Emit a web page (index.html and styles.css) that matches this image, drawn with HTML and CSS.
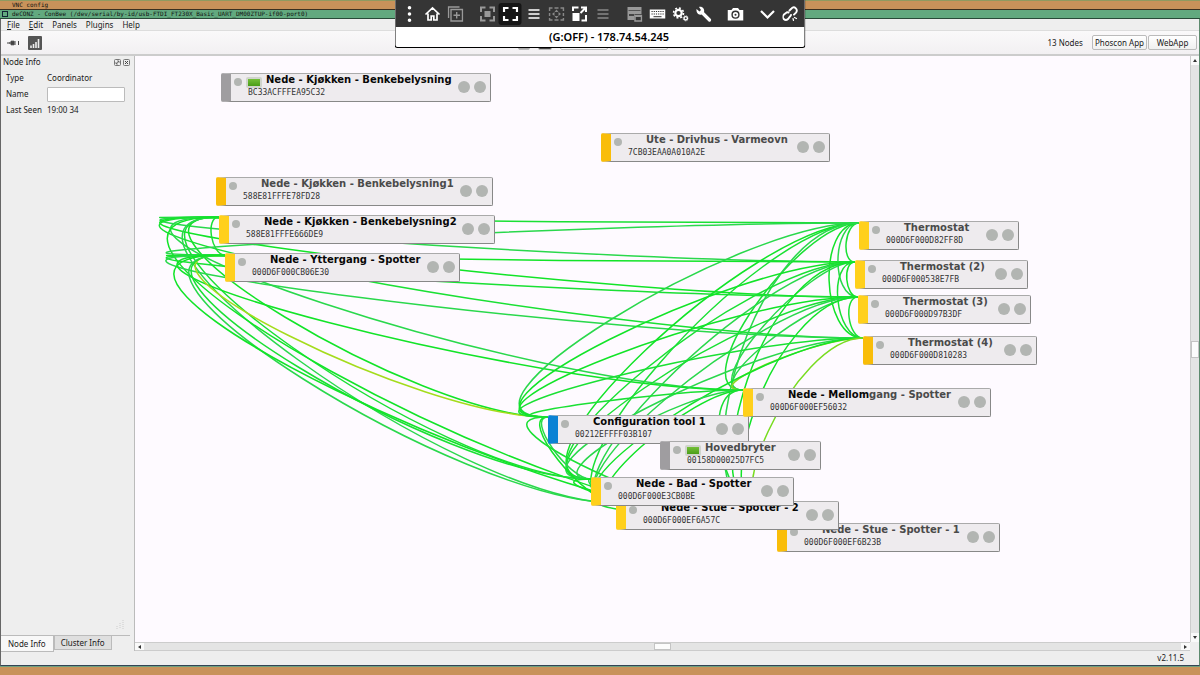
FILE: index.html
```html
<!DOCTYPE html>
<html lang="en">
<head>
<meta charset="utf-8">
<title>deCONZ</title>
<link rel="stylesheet" href="styles.css">
</head>
<body>
<div class="titlebar titlebar-vnc">VNC config</div>
<div class="titlebar titlebar-app"><span class="win-box"></span>deCONZ - ConBee (/dev/serial/by-id/usb-FTDI_FT230X_Basic_UART_DM00ZTUP-if00-port0)</div>

<div class="window">
  <nav class="menu">
    <button><u>F</u>ile</button><button><u>E</u>dit</button><button>Panels</button><button>Plugins</button><button>Help</button>
  </nav>

  <div class="toolbar">
    <button class="icon-btn" aria-label="Connect"><svg width="14" height="8" viewBox="0 0 14 8"><path d="M1 4h3M5 2.200h3v3.600H5zM3 4h3" stroke="#444" stroke-width="1" fill="#444"/><path d="M8 3h2M8 5h2M12.500 2v4" stroke="#444" stroke-width="1"/></svg></button>
    <button class="icon-btn" aria-label="Signal"><svg width="14" height="14" viewBox="0 0 14 14"><rect width="14" height="14" rx="1" fill="#555"/><path d="M3 12V9.500M5.500 12V8M8 12V6M10.500 12V3" stroke="#eee" stroke-width="1.600"/></svg></button>
    <div class="tool-mid">
      <button class="chip chip-grey" aria-label="Indicator"></button>
      <button class="chip chip-dark" aria-label="Neighbours"></button>
      <button class="chip chip-wide" aria-label="Leave"></button>
      <button class="chip chip-wider" aria-label="Join"></button>
    </div>
    <span class="count">13 Nodes</span>
    <button class="push">Phoscon App</button>
    <button class="push">WebApp</button>
  </div>

  <div class="main">
    <aside class="panel">
      <div class="panel-head"><span>Node Info</span>
        <button aria-label="Float"><svg width="7" height="7" viewBox="0 0 7 7"><rect x=".5" y=".5" width="6" height="6" rx="1" fill="none" stroke="#777"/><path d="M2 5l3-3M3 2h2v2M2 3v2h2" fill="none" stroke="#555" stroke-width=".7"/></svg></button>
        <button aria-label="Close"><svg width="7" height="7" viewBox="0 0 7 7"><rect x=".5" y=".5" width="6" height="6" rx="1" fill="none" stroke="#777"/><path d="M2 2l3 3M5 2L2 5" stroke="#444"/></svg></button>
      </div>
      <div class="form">
        <span>Type</span><span>Coordinator</span>
        <label for="name">Name</label><input id="name" type="text">
        <span>Last Seen</span><span>19:00 34</span>
      </div>
      <svg class="grip" width="9" height="9" viewBox="0 0 9 9"><path d="M8 0v9M5 3v6M2 6v3" stroke="#ccc" stroke-dasharray="1 1"/></svg>
      <div class="tabs"><button class="tab tab-on">Node Info</button><button class="tab">Cluster Info</button></div>
    </aside>

    <div class="view">
      <div class="scene" id="scene">
        <svg class="links" id="links"></svg>

        <div class="node off" style="left:86px;top:17px;width:270px"><i class="led"></i><i class="battery"></i><b class="dark">Nede - Kjøkken - Benkebelysning</b><code>BC33ACFFFEA95C32</code><i class="ports"></i></div>
        <div class="node amber" style="left:466px;top:77px;width:229px"><i class="led"></i><b>Ute - Drivhus - Varmeovn</b><code>7CB03EAA0A010A2E</code><i class="ports"></i></div>
        <div class="node amber" style="left:81px;top:121px;width:277px"><i class="led"></i><b>Nede - Kjøkken - Benkebelysning1</b><code>588E81FFFE78FD28</code><i class="ports"></i></div>
        <div class="node" id="b2" style="left:84px;top:159px;width:276px"><i class="led"></i><b class="dark">Nede - Kjøkken - Benkebelysning2</b><code>588E81FFFE666DE9</code><i class="ports"></i></div>
        <div class="node" id="yt" style="left:90px;top:197px;width:235px"><i class="led"></i><b class="dark">Nede - Yttergang - Spotter</b><code>000D6F000CB06E30</code><i class="ports"></i></div>
        <div class="node" id="t1" style="left:724px;top:165px;width:160px"><i class="led"></i><b>Thermostat</b><code>000D6F000D82FF8D</code><i class="ports"></i></div>
        <div class="node" id="t2" style="left:720px;top:204px;width:173px"><i class="led"></i><b>Thermostat (2)</b><code>000D6F000538E7FB</code><i class="ports"></i></div>
        <div class="node" id="t3" style="left:723px;top:239px;width:173px"><i class="led"></i><b>Thermostat (3)</b><code>000D6F000D97B3DF</code><i class="ports"></i></div>
        <div class="node amber" id="t4" style="left:728px;top:280px;width:174px"><i class="led"></i><b>Thermostat (4)</b><code>000D6F000D810283</code><i class="ports"></i></div>
        <div class="node amber" id="s1" style="left:642px;top:467px;width:223px"><i class="led"></i><b>Nede - Stue - Spotter - 1</b><code>000D6F000EF6B23B</code><i class="ports"></i></div>
        <div class="node" id="s2" style="left:481px;top:445px;width:223px"><i class="led"></i><b class="dark">Nede - Stue - Spotter - 2</b><code>000D6F000EF6A57C</code><i class="ports"></i></div>
        <div class="node blue" id="cf" style="left:413px;top:359px;width:201px"><i class="led"></i><b class="dark">Configuration tool 1</b><code>00212EFFFF03B107</code><i class="ports"></i></div>
        <div class="node" id="me" style="left:608px;top:332px;width:248px"><i class="led"></i><b><span class="dark">Nede - Mellom</span>gang - Spotter</b><code>000D6F000EF56032</code><i class="ports"></i></div>
        <div class="node off" style="left:525px;top:385px;width:161px"><i class="led"></i><i class="battery"></i><b>Hovedbryter</b><code>00158D00025D7FC5</code><i class="ports"></i></div>
        <div class="node" id="ba" style="left:456px;top:421px;width:203px"><i class="led"></i><b class="dark">Nede - Bad - Spotter</b><code>000D6F000E3CB0BE</code><i class="ports"></i></div>
      </div>
      <div class="vbar"><button aria-label="Up"><i class="arrow up"></i></button><span class="track"><span class="thumb"></span></span><button aria-label="Down"><i class="arrow down"></i></button></div>
      <div class="hbar"><button aria-label="Left"><i class="arrow left"></i></button><span class="track"><span class="thumb"></span></span><button aria-label="Right"><i class="arrow right"></i></button></div>
    </div>
  </div>
  <footer class="status">v2.11.5</footer>
</div>
<div class="desk"></div>

<div class="overlay">
  <div class="tools">
    <div class="group">
      <button aria-label="More"><svg viewBox="0 0 16 16"><path d="M8 1.800h.01M8 8h.01M8 14.200h.01" stroke="#fff" stroke-width="3.600" stroke-linecap="round"/></svg></button>
      <button aria-label="Home"><svg viewBox="0 0 16 16"><path d="M1 8.500L8 2l7 6.500M3.500 7.500V14h3.200v-4h2.600v4h3.200V7.500" fill="none" stroke="#fff" stroke-width="1.700"/></svg></button>
      <button class="dim" aria-label="New session"><svg viewBox="0 0 16 16"><path d="M3.500 3.500h11.500v11.500H3.500zM1 12V1h11M9.200 6v6.500M6 9.200h6.500" fill="none" stroke="#999" stroke-width="1.400"/></svg></button>
    </div>
    <div class="group">
      <button aria-label="Fit"><svg viewBox="0 0 16 16"><path d="M1.500 6V1.500H6M10 1.500h4.500V6M14.500 10v4.500H10M6 14.500H1.500V10" fill="none" stroke="#999" stroke-width="2"/><path d="M5 5h6v6H5z" fill="#999"/></svg></button>
      <button class="on" aria-label="Full screen"><svg viewBox="0 0 16 16"><path d="M1.500 6V2H6M10 2h4.500v4M14.500 10v4H10M6 14H1.500v-4" fill="none" stroke="#fff" stroke-width="2.200"/></svg></button>
      <button aria-label="Options"><svg viewBox="0 0 16 16"><path d="M3 4h11M3 8h11M3 12h11" stroke="#fff" stroke-width="1.700"/></svg></button>
      <button aria-label="Scale"><svg viewBox="0 0 16 16"><path d="M1 5V2h3M6 2h4M12 2h3v3M15 7v3M15 12v2h-3M10 14H6M4 14H1v-2M1 10V7" fill="none" stroke="#888" stroke-width="1.600"/><path d="M8 3.500l2 2.500H6zM8 12.500l2-2.500H6zM3.500 8L6 6v4zM12.500 8L10 6v4z" fill="#888"/></svg></button>
      <button aria-label="Resize"><svg viewBox="0 0 16 16"><path d="M1 7h7v8H1z" fill="#fff"/><path d="M1.500 5V1.500H7M9.500 1.500h5V6M9 7l5-5M14.500 9v5.500H10" fill="none" stroke="#fff" stroke-width="2"/></svg></button>
      <button aria-label="Options"><svg viewBox="0 0 16 16"><path d="M3 4h11M3 8h11M3 12h11" stroke="#888" stroke-width="1.500"/></svg></button>
    </div>
    <div class="group">
      <button aria-label="Windows"><svg viewBox="0 0 16 16"><path d="M1 1h14v7H8v6H1z" fill="#999"/><path d="M2.500 8h5v2h-5z" fill="#444"/><path d="M2 4.500h12" stroke="#555"/><path d="M8.500 9.500h6.500V15H8.500z" fill="#353535" stroke="#999" stroke-width="1.500"/><path d="M8.500 9h6.500v2H8.500z" fill="#999"/></svg></button>
      <button aria-label="Keyboard"><svg viewBox="0 0 16 16"><path d="M0 3.500h16v9H0z" fill="#fff"/><path d="M2 5.500h12.500M2 8h12.500" stroke="#333" stroke-width="1.200" stroke-dasharray="1.200 1"/><path d="M4 10.700h8" stroke="#333"/></svg></button>
      <button aria-label="Settings"><svg viewBox="0 0 16 16" fill="none" stroke="#fff"><circle cx="6" cy="7" r="3.200" stroke-width="2.200"/><circle cx="6" cy="7" r="5" stroke-width="1.600" stroke-dasharray="2 1.900"/><circle cx="13.200" cy="12.300" r="1.700" stroke-width="1.400"/><circle cx="13.200" cy="12.300" r="2.600" stroke-width=".8" stroke-dasharray="1 1"/></svg></button>
      <button aria-label="Tools"><svg viewBox="0 0 16 16"><path d="M6.500 6.500l7.500 7.500" stroke="#fff" stroke-width="3.200" stroke-linecap="round"/><path d="M1 3l3 2.500 1.500-1.500L3.500 1C6.500 0 9 2.500 8.700 5.500L6 8.500C3 9.500.5 6.500 1 3z" fill="#fff"/></svg></button>
    </div>
    <div class="group">
      <button aria-label="Capture"><svg viewBox="0 0 16 16"><path d="M0 4h4l1.500-2h5L12 4h4v10.500H0z" fill="#fff"/><circle cx="8" cy="8.700" r="3.400" fill="none" stroke="#333" stroke-width="1.400"/><circle cx="8" cy="8.700" r="1" fill="#333"/></svg></button>
    </div>
    <div class="group">
      <button aria-label="Collapse"><svg viewBox="0 0 16 16"><path d="M1.500 5L8 11.500 14.500 5" fill="none" stroke="#fff" stroke-width="2.200"/></svg></button>
      <button aria-label="Disconnect"><svg viewBox="0 0 16 16" fill="none" stroke="#fff" stroke-width="1.900" stroke-linecap="round"><path d="M7 4.500L9 2.500a3 3 0 0 1 4.500 4.200L11.500 8.700M8.500 9a3 3 0 0 1-1 1.500L5.500 13a3 3 0 0 1-4.300-4.200L4 6.500a3 3 0 0 1 2 0"/><path d="M12 11.500l2 1M10.500 12.500l.5 2" stroke-width="1.200"/></svg></button>
    </div>
  </div>
  <div class="caption">(G:OFF) - 178.74.54.245</div>
</div>
<script src="links.js"></script>
</body>
</html>
```
FILE: styles.css
```css
* { box-sizing: border-box; }
body {
  margin: 0;
  min-height: 100vh;
  display: flex;
  flex-direction: column;
  background: #c8925a;
  font: 8px/12px "Noto Sans", sans-serif;
  color: #1a1a1a;
}
button, input {
  font: inherit;
  color: inherit;
  margin: 0;
  padding: 0;
  border: 0;
  background: none;
}
svg { display: block; }

.titlebar {
  display: flex;
  align-items: center;
  height: 10px;
  padding-left: 12px;
  border-top: 1px solid #8f9a60;
  border-bottom: 1px solid #3a3020;
  font: 6px/8px "DejaVu Sans Mono", monospace;
  color: #111;
  white-space: pre;
}
.titlebar-vnc { background: #c8925a; }
.titlebar-app {
  height: 9px;
  padding-left: 2px;
  gap: 4px;
  background: #62a97f;
  border-top: 0;
  border-bottom-color: #284a38;
}
.win-box { width: 6px; height: 6px; border: 1px solid #123; }

.window {
  flex: 1;
  display: flex;
  flex-direction: column;
  background: #eee;
  border: solid #5d8a6e;
  border-width: 0 1px 1px;
  border-left-color: #666;
  border-bottom-color: #345;
}
.menu {
  display: flex;
  gap: 9px;
  height: 12px;
  padding-left: 6px;
  border-bottom: 1px solid #ddd;
}
.toolbar {
  display: flex;
  align-items: center;
  height: 25px;
  padding: 0 2px 0 5px;
  background: linear-gradient(#faf9fa, #f2f0f2);
  border-bottom: 2px solid #ccc;
}
.icon-btn { width: 22px; }
.tool-mid { display: flex; gap: 8px; align-items: center; margin-left: 468px; }
.chip { height: 14px; width: 12px; border-radius: 2px; border: 1px solid #bbb; background: #f5f5f5; }
.chip-grey { background: #aaa; }
.chip-dark { background: #444; width: 14px; }
.chip-wide { width: 48px; }
.chip-wider { width: 58px; margin-left: -6px; }
.count { margin: 0 8px 0 auto; }
.push {
  height: 15px;
  min-width: 49px;
  padding: 0 2px;
  margin-left: 1px;
  border: 1px solid #bbb;
  border-radius: 2px;
  background: linear-gradient(#fff, #f0f0f0);
}

.main { flex: 1; display: flex; }
.panel { width: 133px; display: flex; flex-direction: column; }
.panel-head { display: flex; align-items: center; gap: 2px; padding: 0 4px 0 2px; }
.panel-head span { flex: 1; }
.form {
  display: grid;
  grid-template-columns: 37px 78px;
  grid-auto-rows: 16px;
  align-items: center;
  column-gap: 4px;
  padding: 2px 5px;
  white-space: nowrap;
}
.form input { height: 15px; width: 100%; background: #fff; border: 1px solid #bbb; border-radius: 1px; }
.grip { margin: auto 10px 6px auto; }
.tabs { display: flex; align-items: flex-start; margin-right: 4px; border-top: 1px solid #bbb; height: 16px; }
.tab { height: 14px; padding: 0 6px; border: 1px solid #bbb; border-top: 0; background: #dfdfdf; }
.tab-on { height: 16px; padding: 0 7px; background: #f8f8f8; border-left: 0; }

.view {
  flex: 1;
  min-width: 0;
  display: grid;
  grid-template: 1fr 9px / 1fr 9px;
  border-left: 1px solid #bbb;
}
.scene { position: relative; overflow: hidden; background: #fefaff; }
.links { position: absolute; inset: 0; width: 100%; height: 100%; }
.links path { fill: none; stroke-width: 1.500px; }

.node {
  position: absolute;
  height: 29px;
  background: #eeebee;
  border: 1px solid #aaa;
  border-right-color: #888;
  border-bottom-color: #888;
  border-radius: 2px;
  border-left: 10px solid #ffd01c;
  white-space: nowrap;
}
.amber { border-left-color: #f9bd09; }
.off { border-left-color: #9f9da0; }
.blue { border-left-color: #0a82d4; }
.node b {
  position: absolute;
  left: 35px;
  top: -1px;
  font: bold 10px/13px "DejaVu Sans", sans-serif;
  color: #4a4a4a;
}
.node .dark { color: #080808; }
.node code {
  position: absolute;
  left: 17px;
  top: 13px;
  font: 8px/11px "DejaVu Sans Mono", monospace;
  color: #333;
}
.led { position: absolute; left: 3px; top: 4px; width: 8px; height: 8px; border-radius: 50%; background: #b2b5b2; }
.ports { position: absolute; right: 4px; top: 7px; width: 28px; height: 12px; display: flex; justify-content: space-between; }
.ports::before, .ports::after { content: ""; width: 12px; height: 12px; border-radius: 50%; background: #b2b5b2; }
.battery { position: absolute; left: 15px; top: 3px; width: 16px; height: 11px; border: 2px solid #d0d4cc; border-radius: 2px; background: linear-gradient(#74bf38, #4a9d18); }

.vbar, .hbar { display: flex; background: #e4e4e4; border: 1px solid #ccc; }
.vbar { flex-direction: column; border-width: 0 0 0 1px; }
.hbar { border-width: 1px 0; }
.vbar button, .hbar button { display: grid; place-items: center; background: #fafafa; }
.vbar button { height: 9px; }
.hbar button { width: 9px; }
.track { flex: 1; display: flex; align-items: center; justify-content: center; }
.thumb { background: #fcfcfc; border: 1px solid #c4c4c4; }
.vbar .thumb { width: 8px; height: 17px; }
.hbar .thumb { width: 17px; height: 7px; }
.arrow { border: 2px solid transparent; }
.up { border-top: 0; border-bottom: 3px solid #333; }
.down { border-bottom: 0; border-top: 3px solid #333; }
.left { border-left: 0; border-right: 3px solid #333; }
.right { border-right: 0; border-left: 3px solid #333; }

.status { height: 14px; padding: 1px 15px 0 0; text-align: right; }
.desk { height: 9px; border-top: 1px solid #6fa080; }

.overlay {
  position: absolute;
  top: 0;
  left: 50%;
  width: 411px;
  transform: translateX(-50%);
  border: 1px solid #000;
  border-top: 0;
  border-radius: 0 0 3px 3px;
  background: #fff;
  overflow: hidden;
}
.tools { display: flex; gap: 9px; height: 27px; align-items: center; padding-left: 2px; background: #353535; }
.group { display: flex; }
.tools button { width: 23px; height: 22px; display: grid; place-items: center; border-radius: 3px; }
.tools .on { background: #161616; }
.tools svg { width: 16px; height: 16px; }
.caption { padding: 0 0 1px 18px; text-align: center; font: 600 11px/19px "Noto Sans", sans-serif; color: #000; }
```
FILE: links.js
```js
const svg = document.getElementById("links");

// Anchor of a link: top of the node's left edge.
const anchor = id => {
  const n = document.getElementById(id);
  return [n.offsetLeft, n.offsetTop + 2];
};

const links = {
  b2: "t1 t2 t3 t4 me cf ba s2 s1 yt",
  yt: "t1 t2 t3 t4 me cf ba s2 s1",
  t1: "t2 t3 t4 me cf ba s2 s1",
  t2: "t3 t4 me cf ba s2 s1",
  t3: "t4 me cf ba s2 s1",
  t4: "me cf ba s2 s1",
  me: "cf ba s2 s1",
  cf: "ba s2 s1",
  ba: "s2 s1",
  s2: "s1"
};
const weak = { "yt-cf": "#a4dc1c", "t4-me": "#8cd81c", "t4-s1": "#78dc20" };
const shades = ["#1ae034", "#2ad84c", "#12e428"];

let i = 0;
for (const [from, list] of Object.entries(links)) {
  for (const to of list.split(" ")) {
    const [x0, y0] = anchor(from);
    const [x1, y1] = anchor(to);
    const d = Math.max(0.4 * Math.abs(x1 - x0), 0.37 * Math.abs(y1 - y0));
    const path = document.createElementNS("http://www.w3.org/2000/svg", "path");
    path.setAttribute("d", `M${x0} ${y0}C${x0 - d} ${y0} ${x1 - d} ${y1} ${x1} ${y1}`);
    path.setAttribute("stroke", weak[from + "-" + to] || shades[i++ % 3]);
    svg.appendChild(path);
  }
}
```
